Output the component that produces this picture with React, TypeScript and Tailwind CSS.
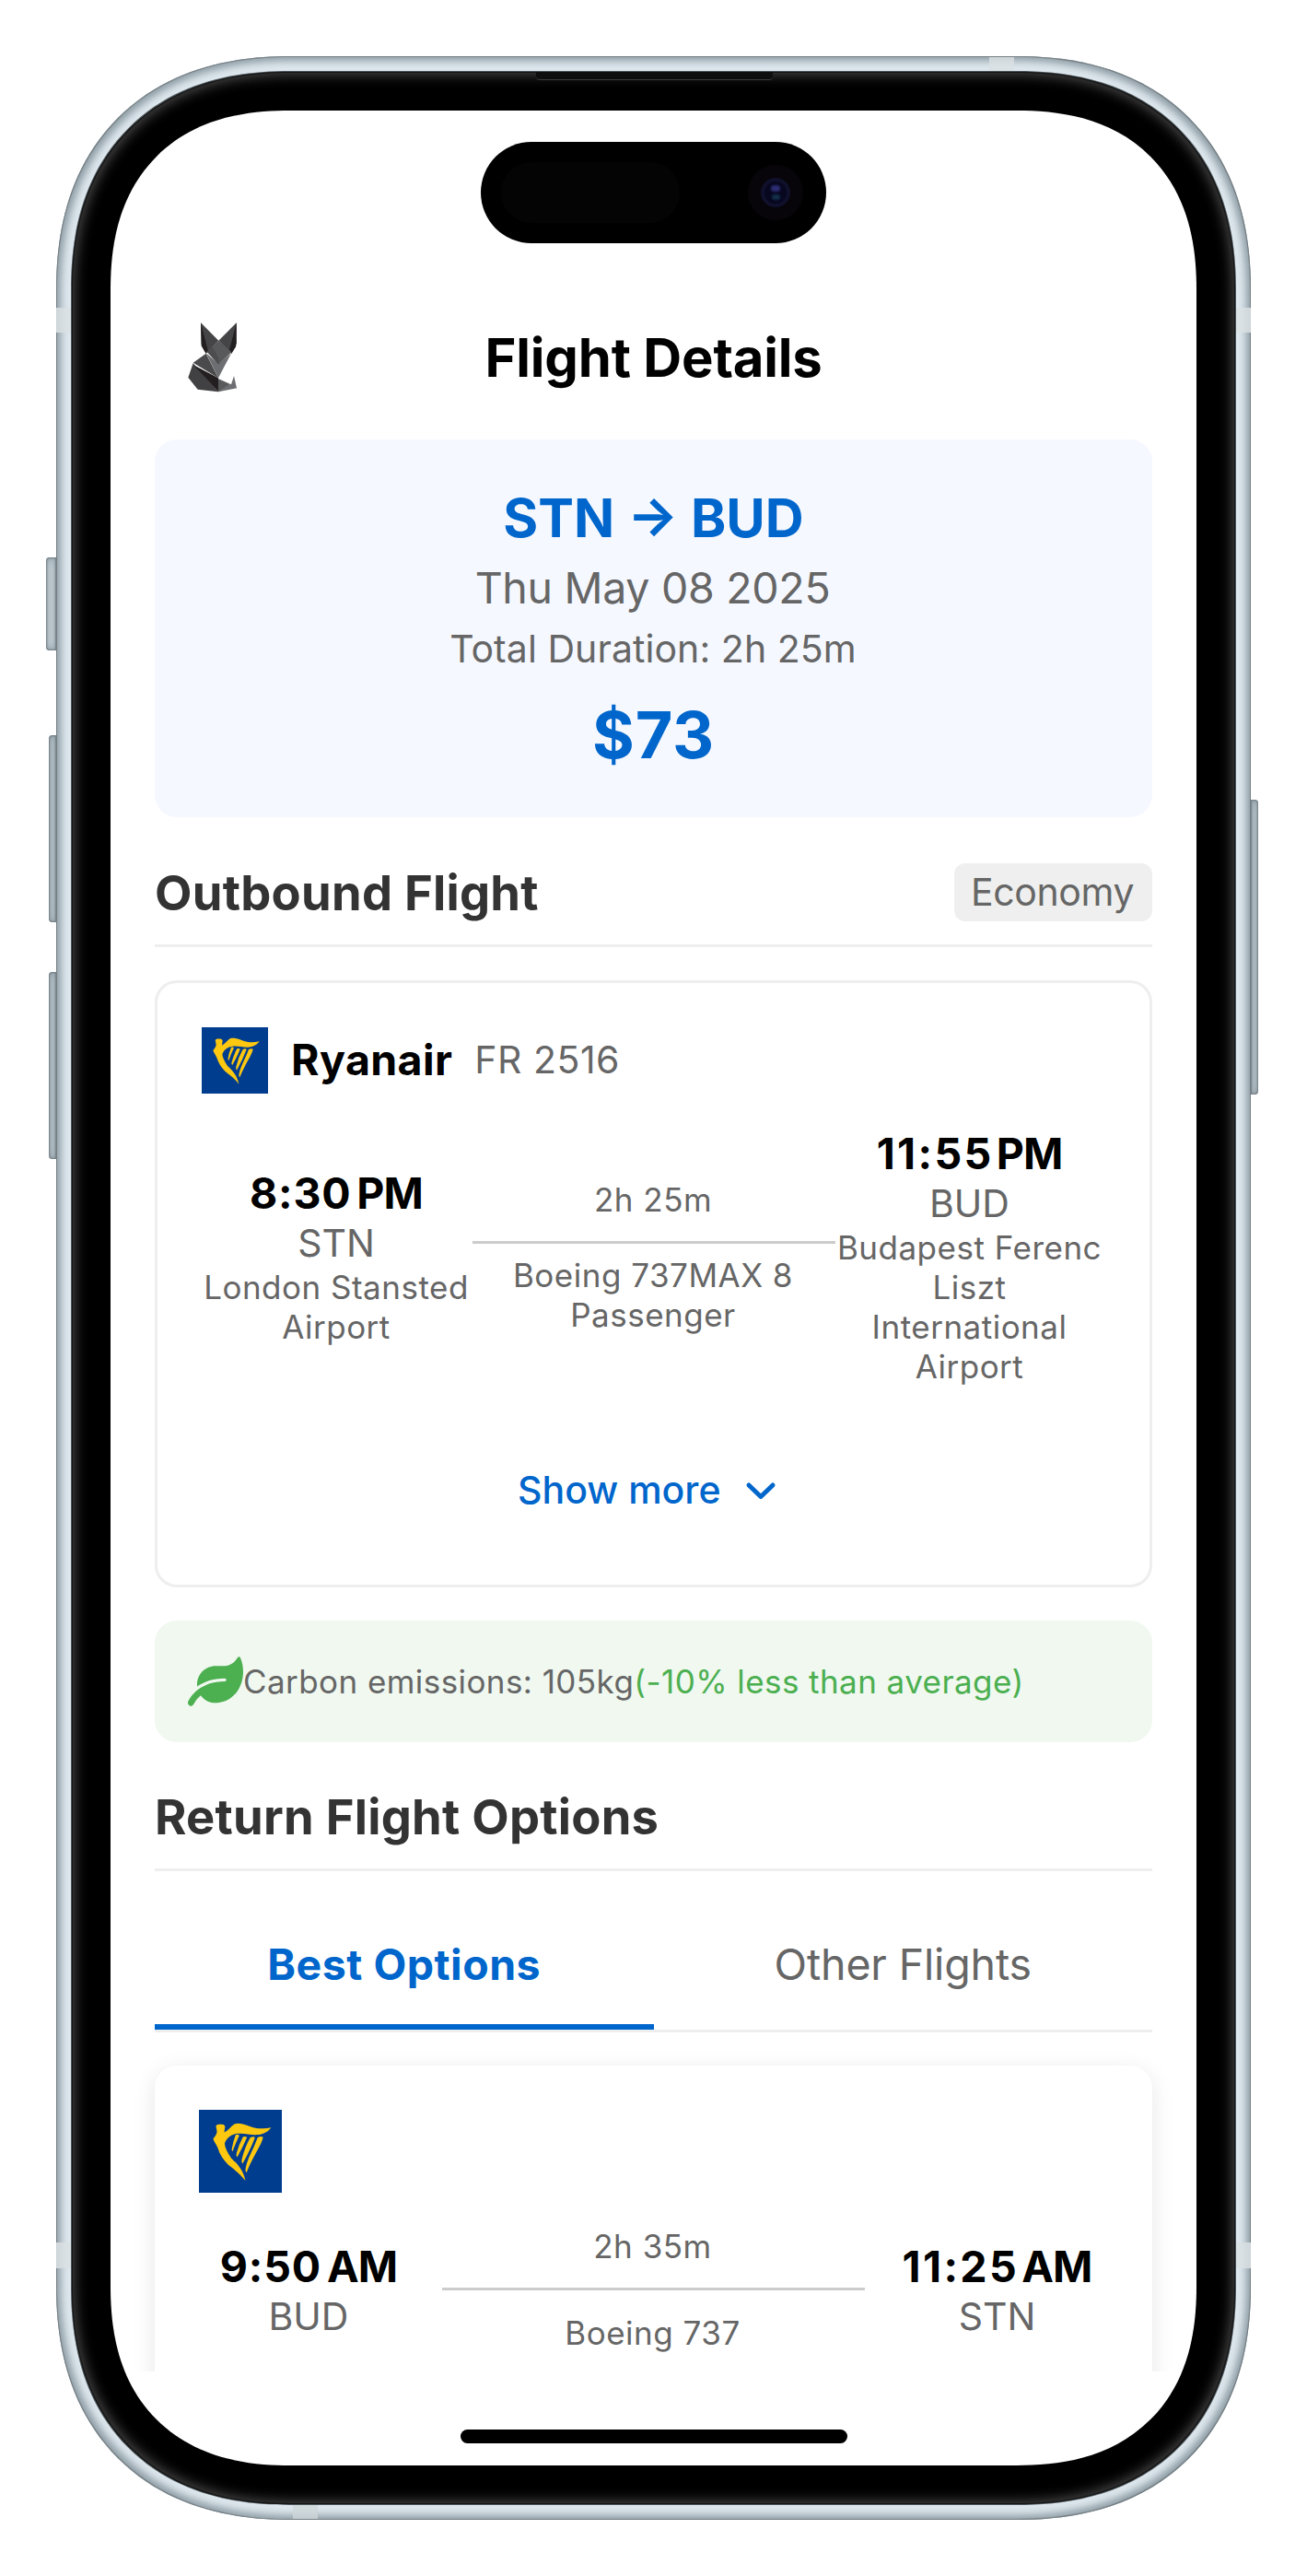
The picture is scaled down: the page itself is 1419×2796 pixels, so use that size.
import type { ReactNode } from "react";
import { FaLeaf } from "react-icons/fa";

function FoxLogo() {
  return (
    <svg className="mt-[1px] h-[76px] w-[53px]" viewBox="71 89 159 228" aria-hidden="true">
      <polygon points="113,90 171,148 130,190 115,165" fill="#454547" />
      <polygon points="229,90 171,148 213,190 229,158" fill="#454547" />
      <polygon points="113,90 136,180 130,190 118,170 115,160" fill="#231f20" />
      <polygon points="229,90 206,178 213,190 227,168 229,155" fill="#231f20" />
      <polygon points="130,190 88,220 170,270" fill="#4a4a4c" />
      <polygon points="88,222 72,268 103,307 170,315" fill="#414143" />
      <polygon points="90,228 170,270 170,315" fill="#231f20" />
      <polygon points="130,188 171,225 213,188 170,270" fill="#6d6e71" />
      <polygon points="171,148 133,184 171,226 213,186" fill="#58595b" />
      <polygon points="133,184 171,226 171,205 150,166" fill="#4d4d4f" />
      <polygon points="170,272 212,291 221,263 230,303 170,315" fill="#6d6e71" />
      <polygon points="170,315 205,290 170,274" fill="#58595b" />
    </svg>
  );
}

function HarpLogo({ className }: { className: string }) {
  return (
    <svg className={className} viewBox="0 0 216 216" aria-hidden="true">
      <rect width="216" height="216" fill="#003d8f" />
      <g fill="#fdc80f">
        <path d="M45 46C42 39 50 37 57 38C66 37 70 42 67 50L66 59C74 55 82 45 92 37C108 32 124 40 138 45C156 51 172 49 188 46C181 56 169 64 152 65C134 66 118 60 100 62C82 64 71 76 67 88C68 100 75 112 84 126C100 141 116 157 121 185C109 168 92 156 76 143C64 131 54 116 49 99C44 88 38 81 37 75C40 71 46 66 47 57Z" />
        <path d="M96 65Q103 63 105 67Q95 88 88 108Q84 107 86 100Q89 82 96 65Z" />
        <path d="M115 70Q123 68 125 72Q115 96 100 123Q96 121 98 113Q104 90 115 70Z" />
        <path d="M134 72Q143 68 146 72Q134 104 114 140Q110 138 112 128Q119 98 134 72Z" />
        <path d="M153 72Q164 67 167 72C163 92 143 116 124 163Q120 161 122 150C127 126 142 102 153 72Z" />
      </g>
    </svg>
  );
}

function Time({ time, period, narrow }: { time: string; period: string; narrow?: boolean }) {
  return (
    <div className={`flex justify-center text-[46.5px] leading-[57px] font-bold whitespace-nowrap text-black ${narrow ? "gap-[3px]" : "gap-[6px]"}`}>
      <span className={narrow ? "tracking-[2.4px]" : "tracking-[0.8px]"}>{time}</span>
      <span className="tracking-[-0.9px]">{period}</span>
    </div>
  );
}

function Stop({ time, period, code, airport, narrow, className }: {
  time: string; period: string; code: string; airport?: string[]; narrow?: boolean; className: string;
}) {
  return (
    <div className={className}>
      <Time time={time} period={period} narrow={narrow} />
      <div className="text-[41px] leading-[50px]">{code}</div>
      {airport && (
        <div className="mt-[2px] text-[35px] leading-[43px] tracking-[0.5px]">
          {airport.map((line) => <div key={line} className="whitespace-nowrap">{line}</div>)}
        </div>
      )}
    </div>
  );
}

function SectionHeader({ title, children }: { title: string; children?: ReactNode }) {
  return (
    <div className="mt-[50px] flex h-[91px] items-start justify-between border-b-3 border-[#eeeeee]">
      <h2 className="text-[52.5px] leading-[64px] font-bold tracking-[0.25px] text-[#333333]">{title}</h2>
      {children}
    </div>
  );
}

const metal = "bg-[#d3dee4] shadow-[inset_0_0_2px_1px_#6f7a80,inset_0_0_8px_2px_#94a1a8]";

export default function App() {
  return (
    <div className="flex h-[2796px] w-[1419px] items-start bg-white pt-[61px] pl-[50px] font-['Inter','Liberation_Sans',sans-serif] text-[#666666]">
      {/* Left hardware buttons */}
      <div className="flex w-[11px] shrink-0 flex-col items-end pt-[544px]">
        <div className={`h-[101px] w-[11px] rounded-l-[4px] ${metal}`} />
        <div className={`mt-[92px] h-[203px] w-[8px] rounded-l-[4px] ${metal}`} />
        <div className={`mt-[54px] h-[203px] w-[8px] rounded-l-[4px] ${metal}`} />
      </div>

      {/* Metal frame */}
      <div className="relative h-[2674px] w-[1297px] shrink-0 rounded-[254px] bg-[#dde7ed] p-[17px] shadow-[inset_0_0_0_1px_#757f84,inset_0_0_9px_5px_#8d9ba3] [corner-shape:superellipse(1.18)]">
        <div className="absolute top-[1px] left-[1013px] h-[16px] w-[27px] bg-[#d9e1e3]/80" />
        <div className="absolute bottom-[1px] left-[257px] h-[16px] w-[27px] bg-[#cdd6d8]/80" />
        <div className="absolute top-[273px] left-0 h-[27px] w-[17px] bg-[#d9e1e3]/85" />
        <div className="absolute top-[273px] right-0 h-[27px] w-[17px] bg-[#d9e1e3]/85" />
        <div className="absolute top-[2373px] left-0 h-[28px] w-[17px] bg-[#d9e1e3]/85" />
        <div className="absolute top-[2373px] right-0 h-[28px] w-[17px] bg-[#d9e1e3]/85" />

        {/* Bezel */}
        <div className="relative h-[2640px] w-[1263px] rounded-[237px] bg-black p-[42px] shadow-[0_0_0_1px_#4d565b,inset_0_0_0_1px_#151515,inset_0_0_14px_3px_#4a4a4a] [corner-shape:superellipse(1.19)]">
          <div className="absolute top-0 left-[504px] h-[9px] w-[257px] rounded-b-[4px] border-b border-[#3a3a3a] bg-[#0e0e0e]" />

          {/* Screen */}
          <div className="relative flex h-[2556px] w-[1179px] flex-col overflow-hidden rounded-[195px] bg-white [corner-shape:superellipse(1.23)]">
            <div className="mt-[34px] ml-[402px] flex h-[110px] w-[375px] items-center rounded-full bg-black pl-[22px]">
              <div className="h-[66px] w-[194px] rounded-full bg-[#040404]" />
              <div className="ml-[74px] flex h-[60px] w-[60px] items-center justify-center rounded-full bg-[#07050a]">
                <div className="flex h-[32px] w-[32px] items-center justify-center rounded-full bg-[#10102c]">
                  <div className="flex h-[24px] w-[24px] flex-col items-center justify-center gap-[3px] rounded-full bg-[#07071f]">
                    <div className="h-[7px] w-[10px] rounded-full bg-[#2c2c74] blur-[1px]" />
                    <div className="h-[6px] w-[9px] rounded-full bg-[#142f4a] blur-[1px]" />
                  </div>
                </div>
              </div>
            </div>

            <header className="mt-[85px] grid h-[128px] grid-cols-[200px_1fr_200px] items-start px-[84px]">
              <FoxLogo />
              <h1 className="pt-[3px] text-center text-[58px] leading-[72px] font-bold tracking-[-0.18px] whitespace-nowrap text-black">Flight Details</h1>
            </header>

            <main className="h-[2097px] shrink-0 overflow-hidden px-[48px]">
              <section className="flex h-[410px] flex-col items-center rounded-[24px] bg-[#f5f8ff] pt-[48px]">
                <div className="text-[58px] leading-[74px] font-bold text-[#0066cc]">STN → BUD</div>
                <div className="mt-[10px] pr-[2px] text-[46.5px] leading-[58px] tracking-[-0.3px]">Thu May 08 2025</div>
                <div className="mt-[12px] pr-[1px] text-[41px] leading-[50px] tracking-[0.06px]">Total Duration: 2h 25m</div>
                <div className="mt-[26px] text-[70px] leading-[86px] font-bold tracking-[0.8px] text-[#0066cc]">$73</div>
              </section>

              <SectionHeader title="Outbound Flight">
                <span className="flex h-[63px] w-[215px] items-center justify-center rounded-[12px] bg-[#efefef] pr-[2px] text-[41px] tracking-[-0.38px]">Economy</span>
              </SectionHeader>

              <section className="mt-[36px] h-[659px] rounded-[24px] border-3 border-[#eeeeee] p-[48px]">
                <div className="flex h-[72px] items-center">
                  <HarpLogo className="h-[72px] w-[72px]" />
                  <span className="ml-[25px] text-[46.5px] font-bold tracking-[0.4px] text-black">Ryanair</span>
                  <span className="ml-[24px] text-[41px] tracking-[0.5px]">FR 2516</span>
                </div>
                <div className="mt-[37px] -mr-[1px] flex items-center text-center">
                  <Stop className="w-[294px] shrink-0 pr-[2px]" time="8:30" period="PM" code="STN" airport={["London Stansted", "Airport"]} />
                  <div className="flex-1 text-[35px] leading-[43px] tracking-[0.5px]">
                    <div className="pr-[2px]">2h 25m</div>
                    <div className="mt-[23px] h-[3px] bg-[#cccccc]" />
                    <div className="mt-[13px] pr-[2px]">Boeing 737MAX 8</div>
                    <div className="pr-[2px]">Passenger</div>
                  </div>
                  <Stop className="w-[294px] shrink-0 pr-[3px]" time="11:55" period="PM" narrow code="BUD" airport={["Budapest Ferenc", "Liszt", "International", "Airport"]} />
                </div>
                <button className="mt-[88px] ml-[343px] flex h-[50px] items-center text-[41px] font-medium text-[#0066cc]">
                  Show more
                  <svg className="ml-[26px] h-[20px] w-[34px]" viewBox="0 0 34 20" fill="none" stroke="currentColor" strokeWidth="5" strokeLinecap="round" strokeLinejoin="round" aria-hidden="true">
                    <path d="M4 4L17 16.5L30 4" />
                  </svg>
                </button>
              </section>

              <section className="mt-[36px] flex h-[132px] items-center rounded-[24px] bg-[#f0f8f0] px-[36px] text-[35px] tracking-[0.43px] whitespace-nowrap">
                <FaLeaf className="mt-[-1px] h-[60px] w-[60px] shrink-0 text-[#4caf50]" />
                <span>Carbon emissions: 105kg</span>
                <span className="text-[#4caf50]">(-10% less than average)</span>
              </section>

              <div className="-mt-[1px]">
                <SectionHeader title="Return Flight Options" />
              </div>

              <div className="mt-[36px] flex border-b-3 border-[#eeeeee] text-[46.5px]">
                <div className="flex h-[136px] flex-1 items-center justify-center border-b-6 border-[#0066cc] pt-[1px] font-bold tracking-[0.5px] text-[#0066cc]">Best Options</div>
                <div className="flex h-[130px] flex-1 items-center justify-center pt-[1px] tracking-[-0.14px]">Other Flights</div>
              </div>

              <section className="mt-[36px] h-[420px] rounded-t-[24px] bg-white p-[48px] shadow-[0_6px_24px_rgba(0,0,0,0.1)]">
                <HarpLogo className="h-[90px] w-[90px]" />
                <div className="mt-[37px] flex items-center text-center">
                  <Stop className="w-[239px] shrink-0 pr-[1px]" time="9:50" period="AM" code="BUD" />
                  <div className="mx-[25px] flex-1 text-[35px] leading-[43px] tracking-[0.5px]">
                    <div className="pr-[2px]">2h 35m</div>
                    <div className="mt-[23px] h-[3px] bg-[#cccccc]" />
                    <div className="mt-[25px] pr-[2px]">Boeing 737</div>
                  </div>
                  <Stop className="w-[239px] shrink-0 pr-[2px]" time="11:25" period="AM" narrow code="STN" />
                </div>
              </section>
            </main>

            <div className="mt-[63px] ml-[380px] h-[15px] w-[420px] shrink-0 rounded-full bg-black" />
          </div>
        </div>
      </div>

      {/* Side button */}
      <div className={`mt-[807px] h-[320px] w-[8px] shrink-0 rounded-r-[4px] ${metal}`} />
    </div>
  );
}
